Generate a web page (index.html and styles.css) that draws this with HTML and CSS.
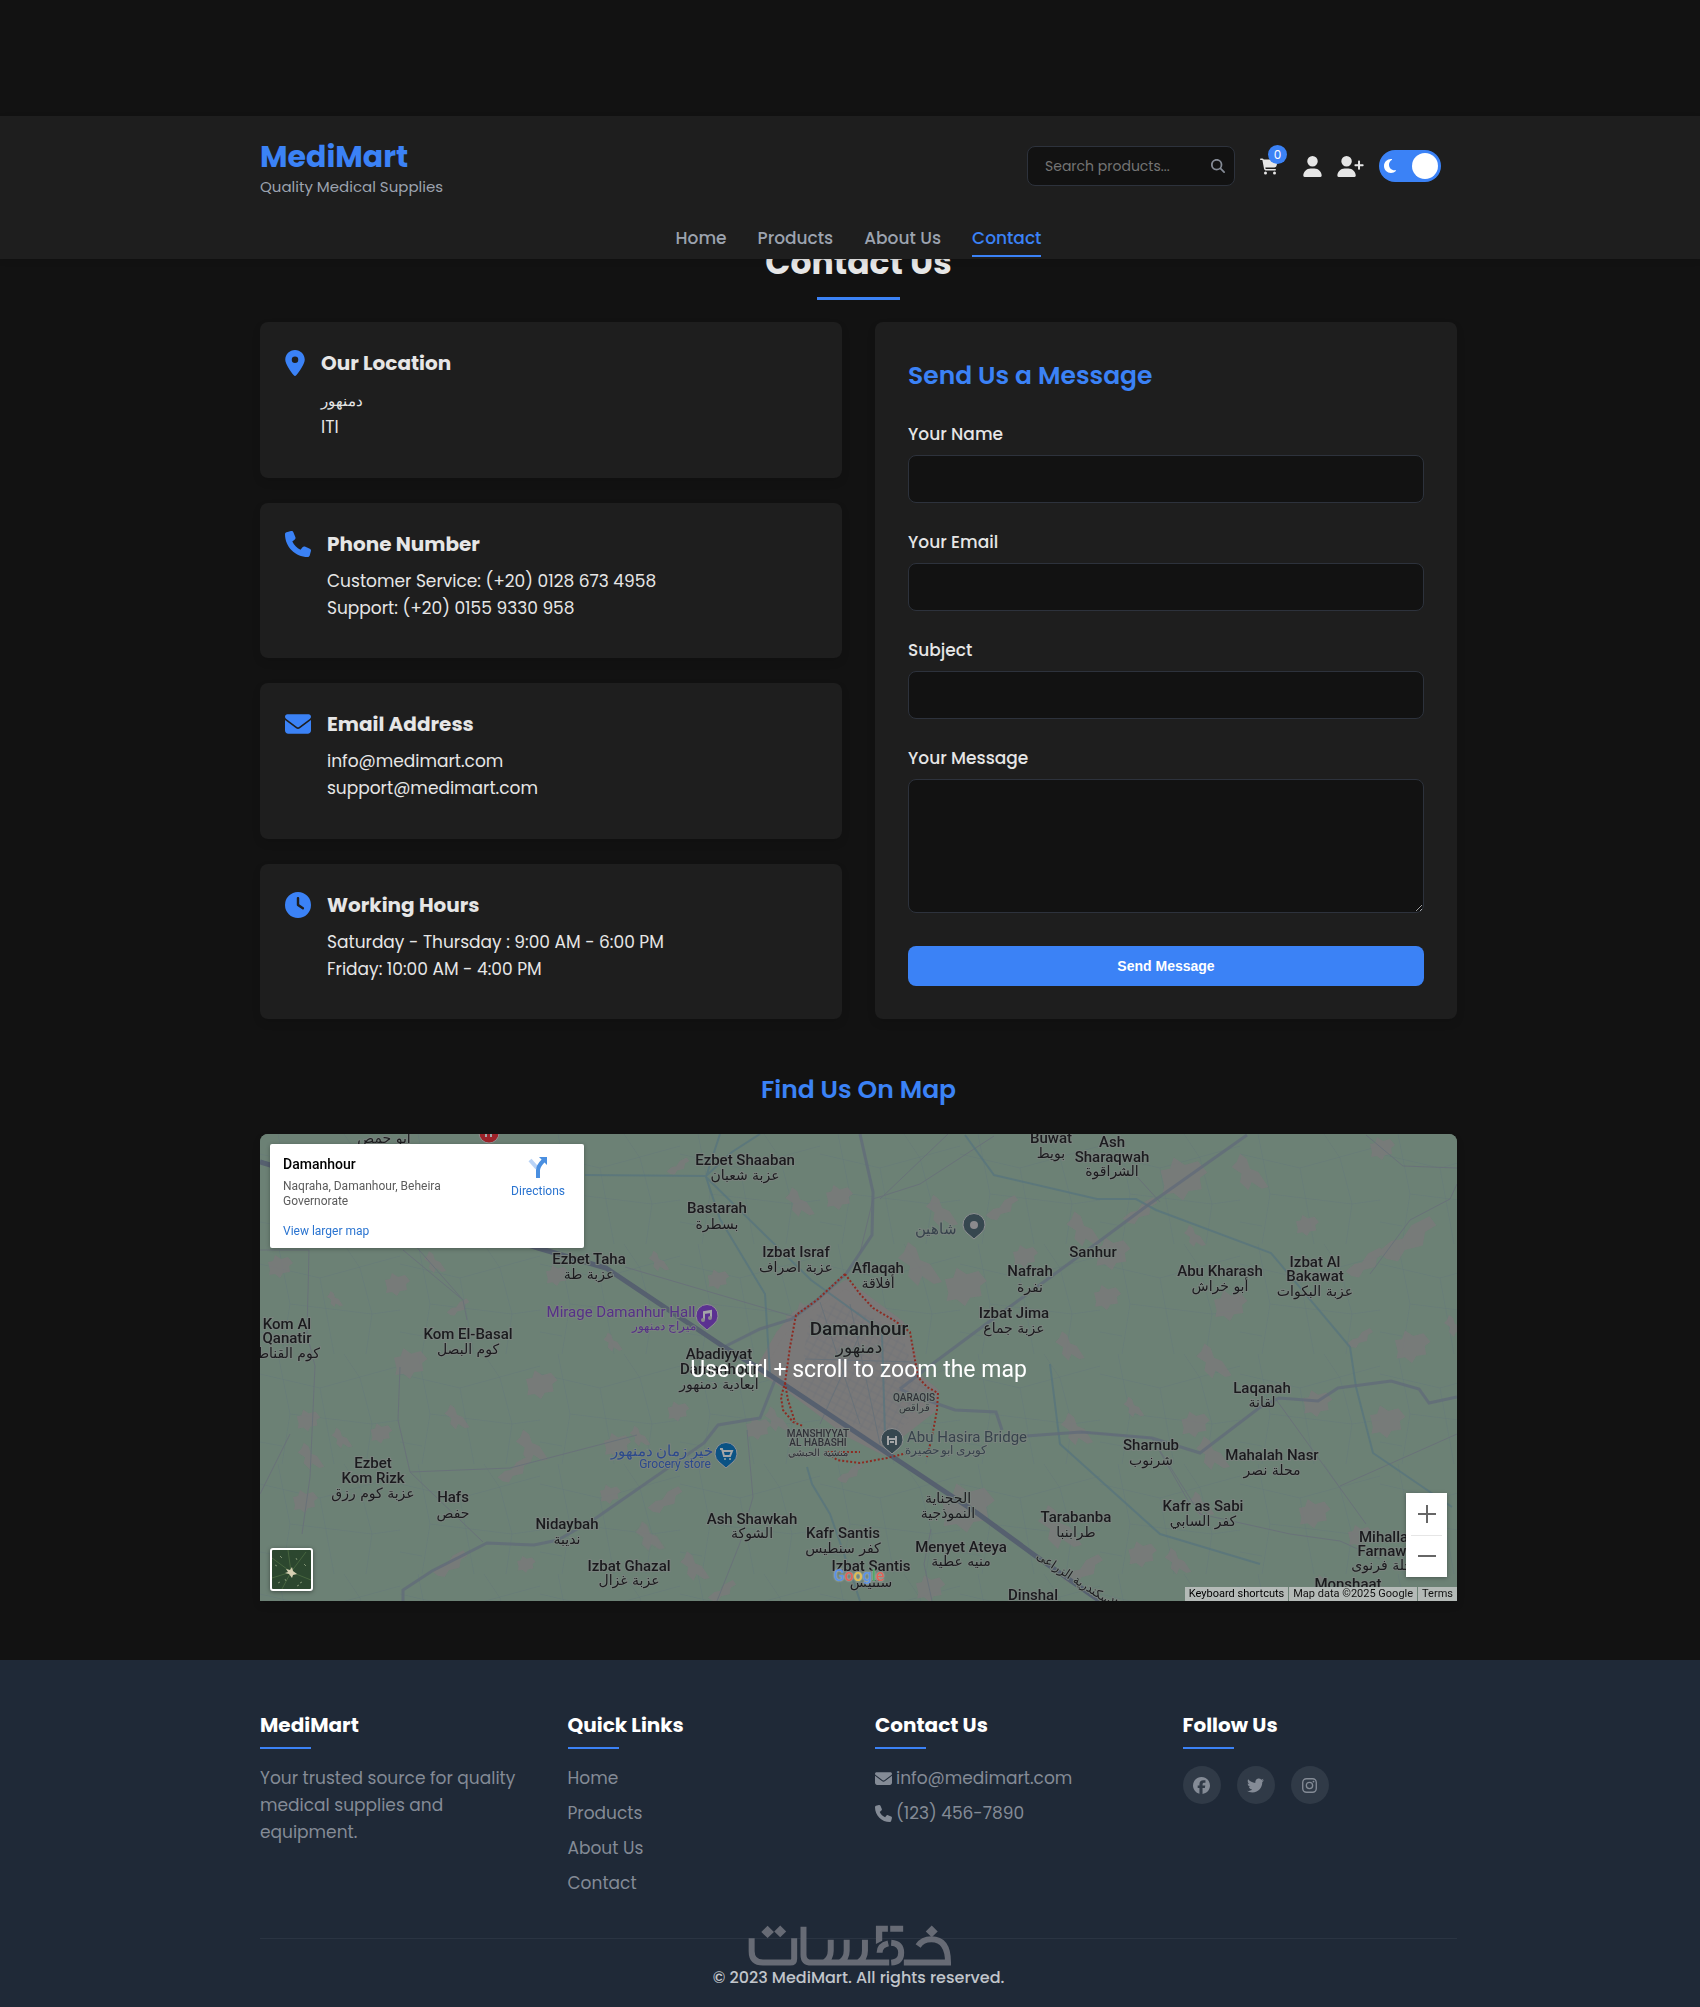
FILE: index.html
```html
<!DOCTYPE html>
<html lang="en">
<head>
<meta charset="utf-8">
<meta name="viewport" content="width=device-width, initial-scale=1">
<title>MediMart - Contact Us</title>
<link rel="stylesheet" href="styles.css">
</head>
<body>
<svg class="defs" aria-hidden="true">
  <symbol id="i-pin" viewBox="0 0 384 512"><path d="M215.7 499.2C267 435 384 279.4 384 192C384 86 298 0 192 0S0 86 0 192c0 87.400 117 243 168.300 307.200c12.300 15.300 35.100 15.300 47.400 0zM192 128a64 64 0 1 1 0 128 64 64 0 1 1 0-128z"/></symbol>
  <symbol id="i-phone" viewBox="0 0 512 512"><path d="M164.900 24.600c-7.700-18.600-28-28.500-47.400-23.200l-88 24C12.100 30.200 0 46 0 64C0 311.400 200.600 512 448 512c18 0 33.800-12.100 38.600-29.500l24-88c5.300-19.400-4.600-39.700-23.200-47.400l-96-40c-16.300-6.800-35.200-2.100-46.300 11.600L304.700 368C234.300 334.700 177.300 277.700 144 207.300L193.300 167c13.700-11.200 18.400-30 11.600-46.300l-40-96z"/></symbol>
  <symbol id="i-mail" viewBox="0 0 512 512"><path d="M48 64C21.500 64 0 85.500 0 112c0 15.100 7.100 29.300 19.200 38.400L236.800 313.600c11.400 8.500 27 8.500 38.400 0L492.800 150.400c12.100-9.100 19.200-23.300 19.200-38.400c0-26.500-21.500-48-48-48L48 64zM0 176L0 384c0 35.300 28.700 64 64 64l384 0c35.300 0 64-28.700 64-64l0-208L294.400 339.200c-22.800 17.100-54 17.100-76.800 0L0 176z"/></symbol>
  <symbol id="i-clock" viewBox="0 0 512 512"><path fill-rule="evenodd" d="M256 0a256 256 0 1 1 0 512A256 256 0 1 1 256 0zM232 120l0 136c0 8 4 15.500 10.700 20l96 64c11 7.400 25.900 4.400 33.300-6.700s4.400-25.900-6.700-33.300L280 243.200 280 120c0-13.300-10.700-24-24-24s-24 10.700-24 24z"/></symbol>
  <symbol id="i-user" viewBox="0 0 448 512"><path d="M224 256A128 128 0 1 0 224 0a128 128 0 1 0 0 256zm-45.700 48C79.800 304 0 383.800 0 482.300C0 498.700 13.300 512 29.700 512l388.600 0c16.400 0 29.700-13.300 29.700-29.700C448 383.800 368.200 304 269.700 304l-91.400 0z"/></symbol>
  <symbol id="i-user-plus" viewBox="0 0 640 512"><path d="M96 128a128 128 0 1 1 256 0A128 128 0 1 1 96 128zM0 482.300C0 383.800 79.800 304 178.300 304l91.400 0C368.200 304 448 383.800 448 482.300c0 16.400-13.300 29.700-29.700 29.700L29.700 512C13.300 512 0 498.700 0 482.300zM504 312l0-64-64 0c-13.300 0-24-10.700-24-24s10.700-24 24-24l64 0 0-64c0-13.300 10.700-24 24-24s24 10.700 24 24l0 64 64 0c13.300 0 24 10.700 24 24s-10.700 24-24 24l-64 0 0 64c0 13.300-10.700 24-24 24s-24-10.700-24-24z"/></symbol>
  <symbol id="i-cart" viewBox="0 0 576 512"><path d="M0 24C0 10.700 10.700 0 24 0L69.500 0c22 0 41.500 12.800 50.600 32l411 0c26.300 0 45.500 25 38.600 50.400l-41 152.300c-8.500 31.400-37 53.300-69.500 53.300l-288.500 0 5.400 28.500c2.200 11.300 12.100 19.500 23.600 19.500L488 336c13.300 0 24 10.700 24 24s-10.700 24-24 24l-288.300 0c-34.600 0-64.300-24.600-70.700-58.500L77.400 54.500c-.7-3.800-4-6.500-7.900-6.500L24 48C10.700 48 0 37.300 0 24zM128 464a48 48 0 1 1 96 0 48 48 0 1 1-96 0zm336-48a48 48 0 1 1 0 96 48 48 0 1 1 0-96z"/></symbol>
  <symbol id="i-search" viewBox="0 0 512 512"><path d="M416 208c0 45.900-14.900 88.300-40 122.700L502.600 457.400c12.500 12.500 12.500 32.800 0 45.300s-32.800 12.500-45.300 0L330.700 376c-34.400 25.200-76.800 40-122.700 40C93.100 416 0 322.900 0 208S93.100 0 208 0S416 93.100 416 208zM208 352a144 144 0 1 0 0-288 144 144 0 1 0 0 288z"/></symbol>
  <symbol id="i-moon" viewBox="0 0 384 512"><path d="M223.500 32C100 32 0 132.300 0 256S100 480 223.500 480c60.600 0 115.500-24.200 155.800-63.400c5-4.900 6.300-12.500 3.100-18.700s-10.100-9.700-17-8.500c-9.800 1.700-19.800 2.600-30.100 2.600c-96.900 0-175.500-78.800-175.500-176c0-65.800 36-123.100 89.300-153.300c6.100-3.500 9.200-10.500 7.700-17.300s-7.300-11.900-14.300-12.500c-6.300-.5-12.600-.8-19-.8z"/></symbol>
  <symbol id="i-facebook" viewBox="0 0 512 512"><path d="M512 256C512 114.600 397.400 0 256 0S0 114.600 0 256C0 376 82.700 476.800 194.200 504.500V334.200H141.400V256h52.800V222.300c0-87.100 39.400-127.500 125-127.500c16.200 0 44.200 3.200 55.700 6.400V172c-6-.6-16.500-1-29.600-1c-42 0-58.200 15.900-58.200 57.200V256h83.600l-14.400 78.200H287V510.100C413.800 494.800 512 386.900 512 256z"/></symbol>
  <symbol id="i-twitter" viewBox="0 0 512 512"><path d="M459.370 151.716c.325 4.548.325 9.097.325 13.645 0 138.720-105.583 298.558-298.558 298.558-59.452 0-114.680-17.219-161.137-47.106 8.447.974 16.568 1.299 25.340 1.299 49.055 0 94.213-16.568 130.274-44.832-46.132-.975-84.792-31.188-98.112-72.772 6.498.974 12.995 1.624 19.818 1.624 9.421 0 18.843-1.300 27.614-3.573-48.081-9.747-84.143-51.980-84.143-102.985v-1.299c13.969 7.797 30.214 12.670 47.431 13.319-28.264-18.843-46.781-51.005-46.781-87.391 0-19.492 5.197-37.360 14.294-52.954 51.655 63.675 129.300 105.258 216.365 109.807-1.624-7.797-2.599-15.918-2.599-24.040 0-57.828 46.782-104.934 104.934-104.934 30.213 0 57.502 12.670 76.670 33.137 23.715-4.548 46.456-13.320 66.599-25.340-7.798 24.366-24.366 44.833-46.132 57.827 21.117-2.273 41.584-8.122 60.426-16.243-14.292 20.791-32.161 39.308-52.628 54.253z"/></symbol>
  <symbol id="i-instagram" viewBox="0 0 448 512"><rect x="20" y="52" width="408" height="408" rx="112" fill="none" stroke="currentColor" stroke-width="40"/><circle cx="224" cy="256" r="95" fill="none" stroke="currentColor" stroke-width="40"/><circle cx="344" cy="137" r="27"/></symbol>
  <symbol id="blob-a" viewBox="-15 -12 30 24"><path d="M-12-4l5-1 2-6 6 4 7-2 5 6-4 3 1 6-7 1-3 5-5-4-6 1 1-5z"/></symbol>
  <symbol id="blob-b" viewBox="-15 -12 30 24"><path d="M-6-11l4 3 2 6 5 2 6 9-4 1-6-4-2 5-5-5 1-5-6-4 3-3z"/></symbol>
  <symbol id="blob-c" viewBox="-15 -12 30 24"><path d="M-13 5l6-5 5-1 4-6 8-4 3 4-5 3-1 6-8 2-3 5-5-1z"/></symbol>
</svg>

<header class="site-header">
  <div class="container">
    <div class="header-row">
      <div class="brand">
        <a class="brand-name" href="#">MediMart</a>
        <p class="brand-tag">Quality Medical Supplies</p>
      </div>
      <div class="header-tools">
        <form class="search">
          <input class="search-input" type="search" placeholder="Search products..." aria-label="Search products">
          <button class="search-button" type="button" aria-label="Search"><svg class="ico-search"><use href="#i-search"/></svg></button>
        </form>
        <div class="user-tools">
          <a class="cart" href="#" aria-label="Cart"><svg class="ico-cart"><use href="#i-cart"/></svg><span class="cart-count">0</span></a>
          <a class="tool" href="#" aria-label="Log in"><svg class="ico-user"><use href="#i-user"/></svg></a>
          <a class="tool" href="#" aria-label="Register"><svg class="ico-plus"><use href="#i-user-plus"/></svg></a>
          <label class="theme">
            <input class="theme-input" type="checkbox" checked aria-label="Dark mode">
            <svg class="ico-moon"><use href="#i-moon"/></svg>
          </label>
        </div>
      </div>
    </div>
    <nav class="nav">
      <a class="nav-link" href="#">Home</a>
      <a class="nav-link" href="#">Products</a>
      <a class="nav-link" href="#">About Us</a>
      <a class="nav-link nav-link-active" href="#">Contact</a>
    </nav>
  </div>
</header>

<main class="main">
  <div class="container">
    <h1 class="page-title">Contact Us</h1>
    <div class="contact">
      <div class="info">
        <section class="card">
          <svg class="card-icon card-icon-narrow"><use href="#i-pin"/></svg>
          <div><h2 class="card-title">Our Location</h2><p class="card-text"><span class="card-arabic" lang="ar">دمنهور</span></p><p class="card-text">ITI</p></div>
        </section>
        <section class="card">
          <svg class="card-icon"><use href="#i-phone"/></svg>
          <div><h2 class="card-title">Phone Number</h2><p class="card-text">Customer Service: (+20) 0128 673 4958</p><p class="card-text">Support: (+20) 0155 9330 958</p></div>
        </section>
        <section class="card">
          <svg class="card-icon"><use href="#i-mail"/></svg>
          <div><h2 class="card-title">Email Address</h2><p class="card-text">info@medimart.com</p><p class="card-text">support@medimart.com</p></div>
        </section>
        <section class="card">
          <svg class="card-icon"><use href="#i-clock"/></svg>
          <div><h2 class="card-title">Working Hours</h2><p class="card-text">Saturday - Thursday : 9:00 AM - 6:00 PM</p><p class="card-text">Friday: 10:00 AM - 4:00 PM</p></div>
        </section>
      </div>
      <form class="form">
        <h2 class="form-title">Send Us a Message</h2>
        <div class="field"><label class="label" for="name">Your Name</label><input class="input" id="name" type="text"></div>
        <div class="field"><label class="label" for="email">Your Email</label><input class="input" id="email" type="email"></div>
        <div class="field"><label class="label" for="subject">Subject</label><input class="input" id="subject" type="text"></div>
        <div class="field"><label class="label" for="message">Your Message</label><textarea class="input textarea" id="message"></textarea></div>
        <button class="submit" type="button">Send Message</button>
      </form>
    </div>

    <section class="find">
      <h2 class="find-title">Find Us On Map</h2>
      <div class="map">
        <svg class="map-canvas" viewBox="0 0 1197 467" preserveAspectRatio="xMidYMid slice" role="img" aria-label="Map of Damanhour">
          <defs>
            <pattern id="fields" width="140" height="110" patternUnits="userSpaceOnUse">
              <path class="field-line" d="M0 20L60 34 140 12M18 0L30 60 22 110M60 34L74 110M100 24L112 70 106 110M30 60L112 70 140 66M0 88L22 92M84 0L100 24"/>
            </pattern>
            <pattern id="streets" width="16" height="14" patternUnits="userSpaceOnUse" patternTransform="rotate(28)">
              <path class="street-line" d="M0 3H16M0 10H16M4 0V14M12 0V14"/>
            </pattern>
          </defs>
          <rect class="land" width="1197" height="467"/>
          <rect width="1197" height="467" fill="url(#fields)"/>
          <g class="blobs">
            <use href="#blob-a" x="5" y="120" width="30" height="24"/><use href="#blob-b" x="160" y="115" width="30" height="26"/><use href="#blob-a" x="120" y="138" width="34" height="24"/>
            <use href="#blob-c" x="185" y="163" width="26" height="22"/><use href="#blob-b" x="64" y="155" width="22" height="20"/><use href="#blob-a" x="280" y="130" width="34" height="22"/>
            <use href="#blob-b" x="385" y="110" width="28" height="34"/><use href="#blob-a" x="560" y="50" width="38" height="26"/><use href="#blob-c" x="405" y="22" width="26" height="22"/>
            <use href="#blob-b" x="520" y="38" width="40" height="60"/><use href="#blob-a" x="445" y="130" width="26" height="30"/><use href="#blob-b" x="340" y="190" width="26" height="36"/>
            <use href="#blob-a" x="130" y="212" width="40" height="34"/><use href="#blob-a" x="262" y="235" width="38" height="30"/><use href="#blob-b" x="180" y="265" width="34" height="36"/>
            <use href="#blob-a" x="34" y="270" width="28" height="32"/><use href="#blob-b" x="68" y="290" width="28" height="28"/><use href="#blob-a" x="108" y="286" width="26" height="26"/>
            <use href="#blob-b" x="250" y="290" width="44" height="44"/><use href="#blob-a" x="332" y="298" width="50" height="26"/><use href="#blob-c" x="235" y="320" width="38" height="34"/>
            <use href="#blob-b" x="366" y="290" width="28" height="24"/><use href="#blob-b" x="33" y="305" width="36" height="34"/><use href="#blob-a" x="405" y="262" width="26" height="30"/>
            <use href="#blob-a" x="30" y="350" width="30" height="34"/><use href="#blob-a" x="336" y="350" width="28" height="20"/><use href="#blob-c" x="385" y="350" width="40" height="34"/>
            <use href="#blob-b" x="370" y="382" width="40" height="40"/><use href="#blob-c" x="165" y="415" width="50" height="32"/><use href="#blob-b" x="415" y="410" width="40" height="44"/>
            <use href="#blob-c" x="445" y="445" width="34" height="26"/><use href="#blob-a" x="255" y="420" width="22" height="20"/><use href="#blob-b" x="500" y="265" width="34" height="40"/>
            <use href="#blob-a" x="480" y="282" width="36" height="24"/><use href="#blob-c" x="570" y="328" width="40" height="24"/><use href="#blob-a" x="520" y="160" width="60" height="60"/>
            <use href="#blob-b" x="630" y="95" width="60" height="70"/><use href="#blob-a" x="680" y="130" width="50" height="44"/><use href="#blob-c" x="720" y="60" width="44" height="30"/>
            <use href="#blob-b" x="660" y="55" width="44" height="44"/><use href="#blob-a" x="750" y="110" width="30" height="24"/><use href="#blob-b" x="800" y="65" width="48" height="60"/>
            <use href="#blob-a" x="820" y="102" width="64" height="34"/><use href="#blob-c" x="860" y="60" width="40" height="36"/><use href="#blob-a" x="895" y="20" width="56" height="48"/>
            <use href="#blob-b" x="965" y="10" width="50" height="56"/><use href="#blob-a" x="1030" y="80" width="34" height="22"/><use href="#blob-c" x="1110" y="80" width="74" height="54"/>
            <use href="#blob-c" x="1075" y="112" width="60" height="36"/><use href="#blob-b" x="920" y="85" width="30" height="34"/><use href="#blob-a" x="825" y="150" width="44" height="26"/>
            <use href="#blob-a" x="945" y="155" width="50" height="32"/><use href="#blob-b" x="790" y="190" width="40" height="44"/><use href="#blob-b" x="930" y="205" width="48" height="44"/>
            <use href="#blob-a" x="1130" y="195" width="44" height="34"/><use href="#blob-c" x="1085" y="190" width="30" height="30"/><use href="#blob-b" x="1180" y="170" width="30" height="44"/>
            <use href="#blob-b" x="795" y="275" width="44" height="40"/><use href="#blob-a" x="918" y="275" width="34" height="30"/><use href="#blob-b" x="860" y="260" width="28" height="26"/>
            <use href="#blob-a" x="1105" y="270" width="44" height="34"/><use href="#blob-b" x="930" y="300" width="46" height="38"/><use href="#blob-a" x="1035" y="255" width="44" height="28"/>
            <use href="#blob-a" x="1035" y="360" width="38" height="38"/><use href="#blob-b" x="925" y="345" width="34" height="50"/><use href="#blob-b" x="770" y="360" width="60" height="66"/>
            <use href="#blob-a" x="865" y="405" width="34" height="30"/><use href="#blob-b" x="900" y="410" width="36" height="34"/><use href="#blob-a" x="675" y="340" width="64" height="66"/>
            <use href="#blob-a" x="1080" y="390" width="40" height="24"/><use href="#blob-c" x="800" y="415" width="46" height="44"/><use href="#blob-b" x="1050" y="436" width="30" height="32"/>
            <use href="#blob-a" x="650" y="440" width="40" height="28"/><use href="#blob-a" x="1100" y="2" width="44" height="24"/><use href="#blob-a" x="15" y="16" width="50" height="20"/>
          </g>
          <path class="town" d="M536 181L560 168 586 150 640 190 650 215 657 243 675 258 672 275 640 300 626 318 590 300 540 262 524 250 500 235 520 200z"/>
          <path fill="url(#streets)" d="M550 185L575 168 640 195 655 240 670 258 636 300 600 295 540 255 545 210z"/>
          <path class="road-thin" d="M0 116L49 116 47 200 55 232 50 343 42 400M143 116L203 166 207 186M140 233L138 286 150 338 223 408M365 133L535 183M150 338L250 334 377 301M145 100L203 166M0 360L30 300M487 296L493 363 480 409 457 467M671 395L664 430 672 467M613 65L660 50 734 2M600 119L613 65M821 298L892 304 930 370M892 304L940 380 1030 400 1080 407 1120 425M1080 352L1197 300M688 0L620 65M900 68L870 35M1106 1L1143 32 1197 34M1015 264L1106 390M1110 140L1150 86 1190 65 1197 50M560 168L600 290M600 200L560 290M545 225L655 228M590 170L620 310"/>
          <path class="water" d="M0 27L12 30M325 41L446 42 472 18 500 0M460 0L446 43 460 85 505 160 510 240M446 43L551 146 612 190M622 200L625 300M705 1L734 41 837 65 876 65 896 76 1011 119 1090 213 1096 253 1113 319 1192 373M547 333L552 350 570 380 590 437 600 467M790 230L800 310 900 400 1000 430"/>
          <path class="road" d="M464 213L500 195 532 185 557 166 586 140 612 101 613 58 600 0M640 255L671 231 722 193 837 109 888 71 987 1M640 255L655 262 695 276 736 278 742 296M766 302L821 298 892 304 940 319 999 274 1019 264 1058 267 1078 254 1131 247 1159 255 1169 269 1197 263M515 246L500 284 458 291 444 309 336 384 298 406 274 411 227 409 172 437 143 456V467"/>
          <path class="highway" d="M0 28L278 114 346 134 464 213 510 241 627 319 717 379 777 423 840 467"/>
          <path class="boundary" d="M585 140L557 166 536 181 530 213 525 249 521 263 523 276 533 288 543 292M525 249L528 266 535 288M585 140L600 160 613 174 635 187 650 198 655 226 658 243 667 253 678 259 677 276 672 303 667 323M647 319L627 324 600 329 577 326 567 318H600"/>

          <g class="places">
            <text x="124" y="9" class="ar">أبو حمص</text>
            <text x="485" y="31">Ezbet Shaaban</text><text x="485" y="46" class="ar">عزبة شعبان</text>
            <text x="457" y="79">Bastarah</text><text x="457" y="95" class="ar">بسطرة</text>
            <text x="536" y="123">Izbat Israf</text><text x="536" y="138" class="ar">عزبة اصراف</text>
            <text x="618" y="139">Aflaqah</text><text x="618" y="154" class="ar">أفلاقة</text>
            <text x="833" y="123">Sanhur</text>
            <text x="770" y="142">Nafrah</text><text x="770" y="158" class="ar">نفرة</text>
            <text x="754" y="184">Izbat Jima</text><text x="754" y="199" class="ar">عزبة جماع</text>
            <text x="960" y="142">Abu Kharash</text><text x="960" y="157" class="ar">أبو خراش</text>
            <text x="1055" y="133">Izbat Al</text><text x="1055" y="147">Bakawat</text><text x="1055" y="162" class="ar">عزبة البكوات</text>
            <text x="791" y="9">Buwat</text><text x="791" y="24" class="ar">بويط</text>
            <text x="852" y="13">Ash</text><text x="852" y="28">Sharaqwah</text><text x="852" y="42" class="ar">الشراقوة</text>
            <text x="329" y="130">Ezbet Taha</text><text x="329" y="145" class="ar">عزبة طة</text>
            <text x="208" y="205">Kom El-Basal</text><text x="208" y="220" class="ar">كوم البصل</text>
            <text x="27" y="195">Kom Al</text><text x="27" y="209">Qanatir</text><text x="25" y="224" class="ar">كوم القناطر</text>
            <text x="459" y="225">Abadiyyat</text><text x="459" y="240">Damanhour</text><text x="459" y="255" class="ar">ابعادية دمنهور</text>
            <text x="1002" y="259">Laqanah</text><text x="1002" y="273" class="ar">لقانة</text>
            <text x="891" y="316">Sharnub</text><text x="891" y="331" class="ar">شرنوب</text>
            <text x="1012" y="326">Mahalah Nasr</text><text x="1012" y="341" class="ar">محلة نصر</text>
            <text x="113" y="334">Ezbet</text><text x="113" y="349">Kom Rizk</text><text x="113" y="364" class="ar">عزبة كوم رزق</text>
            <text x="193" y="368">Hafs</text><text x="193" y="384" class="ar">حفص</text>
            <text x="307" y="395">Nidaybah</text><text x="307" y="410" class="ar">نديبة</text>
            <text x="492" y="390">Ash Shawkah</text><text x="492" y="404" class="ar">الشوكة</text>
            <text x="583" y="404">Kafr Santis</text><text x="583" y="419" class="ar">كفر سنطيس</text>
            <text x="688" y="369" class="ar">الحجناية</text><text x="688" y="384" class="ar">النموذجية</text>
            <text x="701" y="418">Menyet Ateya</text><text x="701" y="432" class="ar">منيه عطية</text>
            <text x="816" y="388">Tarabanba</text><text x="816" y="403" class="ar">طرابنبا</text>
            <text x="943" y="377">Kafr as Sabi</text><text x="943" y="392" class="ar">كفر السابي</text>
            <text x="369" y="437">Izbat Ghazal</text><text x="369" y="451" class="ar">عزبة غزال</text>
            <text x="611" y="437">Izbat Santis</text><text x="611" y="453" class="ar">سنتيس</text>
            <text x="773" y="466">Dinshal</text>
            <text x="1126" y="408">Mihallat</text><text x="1126" y="422">Farnawa</text><text x="1126" y="436" class="ar">محلة فرنوى</text>
            <text x="1088" y="455">Monshaat</text>
            <text x="816" y="450" class="ar road-name" transform="rotate(33 816 450)">الإسكندرية الزراعى</text>
            <text x="599" y="201" class="city">Damanhour</text><text x="599" y="219" class="city-ar">دمنهور</text>
            <text x="654" y="267" class="district">QARAQIS</text><text x="654" y="277" class="district">قراقص</text>
            <text x="558" y="303" class="district">MANSHIYYAT</text><text x="558" y="312" class="district">AL HABASHI</text><text x="558" y="322" class="district">منشية الحبشي</text>
            <text x="361" y="183" class="poi purple">Mirage Damanhur Hall</text><text x="404" y="196" class="poi-sub purple">ميراج دمنهور</text>
            <text x="676" y="100" class="poi slate">شاهين</text>
            <text x="707" y="308" class="poi slate">Abu Hasira Bridge</text><text x="686" y="320" class="poi-sub slate">كوبرى ابو حصيرة</text>
            <text x="402" y="322" class="poi blue">خير زمان دمنهور</text><text x="415" y="334" class="poi-sub blue">Grocery store</text>
          </g>
          <g class="pins">
            <path class="pin-edge" fill="#5b3191" d="M447 196l-7-6a11 11 0 1 1 14 0z"/><path class="glyph" d="M444 186V178l7-1v7M444 179l7-1"/><circle fill="#8b8a8d" cx="443" cy="186" r="2"/><circle fill="#8b8a8d" cx="450" cy="184" r="2"/>
            <path class="pin-edge" fill="#36474f" d="M714 105l-7-6a11 11 0 1 1 14 0z"/><circle fill="#8b8a8d" cx="714" cy="91" r="4"/>
            <path class="pin-edge" fill="#36474f" d="M632 320l-7-6a11 11 0 1 1 14 0z"/><path class="glyph" d="M628 311V302M636 311V302M628 305h8M630 308h4"/>
            <path class="pin-edge" fill="#0b5284" d="M466 334l-7-6a11 11 0 1 1 14 0z"/><path class="glyph" d="M460 315h2l2 7h6l2-5h-9"/><circle fill="#9aa" cx="465" cy="325" r="1"/><circle fill="#9aa" cx="470" cy="325" r="1"/>
            <circle class="pin-edge" fill="#9c2229" cx="229" cy="-1" r="10"/><path class="glyph" d="M226-3v6M231-3v6"/>
          </g>
        </svg>
        <p class="map-hint">Use ctrl + scroll to zoom the map</p>
        <div class="place-card">
          <div class="place-info">
            <h3 class="place-name">Damanhour</h3>
            <p class="place-address">Naqraha, Damanhour, Beheira Governorate</p>
            <a class="place-link" href="#">View larger map</a>
          </div>
          <a class="directions" href="#">
            <svg class="ico-directions" viewBox="0 0 20 22"><path d="M2 4l7 8" fill="none" stroke="#b9d3f6" stroke-width="4"/><path d="M10 22v-8q0-4 6-10" fill="none" stroke="#4a8fe0" stroke-width="4"/><path fill="#4a8fe0" d="M11 1h8v8z"/></svg>
            Directions
          </a>
        </div>
        <button class="satellite" type="button" aria-label="Show satellite imagery">
          <svg class="satellite-view" viewBox="0 0 39 39"><rect width="39" height="39" fill="#2c472f"/><path d="M0 8L19 22 39 30M19 22L10 39M19 22L34 2M19 22L0 28M19 22L16 0" stroke="#47653f" fill="none"/><path d="M3 15l2 1M8 6l2 2M28 33l2-1M32 14l2 2M6 33l2-1M24 8l1 2M25 36l2-1M13 29l1 2" stroke="#7d9070" stroke-width="1"/><path fill="#d6cfb2" d="M14 19l4 1 2-3 1 4 4 3-4 1-1 3-3-4-4-1 3-1z"/></svg>
        </button>
        <div class="google" aria-label="Google"><span class="g-blue">G</span><span class="g-red">o</span><span class="g-yellow">o</span><span class="g-blue">g</span><span class="g-green">l</span><span class="g-red">e</span></div>
        <div class="zoom">
          <button class="zoom-button" type="button" aria-label="Zoom in"><svg class="ico-zoom" viewBox="0 0 18 18"><path d="M9 0V18M0 9H18"/></svg></button>
          <button class="zoom-button" type="button" aria-label="Zoom out"><svg class="ico-zoom" viewBox="0 0 18 18"><path d="M0 9H18"/></svg></button>
        </div>
        <div class="legal"><button class="legal-item" type="button">Keyboard shortcuts</button><span class="legal-item">Map data ©2025 Google</span><a class="legal-item" href="#">Terms</a></div>
      </div>
    </section>
  </div>
</main>

<footer class="footer">
  <div class="container">
    <div class="footer-grid">
      <section><h3 class="footer-title">MediMart</h3><p class="footer-text">Your trusted source for quality medical supplies and equipment.</p></section>
      <section><h3 class="footer-title">Quick Links</h3>
        <ul class="footer-list"><li><a class="footer-link" href="#">Home</a></li><li><a class="footer-link" href="#">Products</a></li><li><a class="footer-link" href="#">About Us</a></li><li><a class="footer-link" href="#">Contact</a></li></ul></section>
      <section><h3 class="footer-title">Contact Us</h3>
        <ul class="footer-list"><li class="footer-contact"><svg class="ico-footer"><use href="#i-mail"/></svg>info@medimart.com</li><li class="footer-contact"><svg class="ico-footer"><use href="#i-phone"/></svg>(123) 456-7890</li></ul></section>
      <section><h3 class="footer-title">Follow Us</h3>
        <div class="social"><a class="social-link" href="#" aria-label="Facebook"><svg class="ico-social"><use href="#i-facebook"/></svg></a><a class="social-link" href="#" aria-label="Twitter"><svg class="ico-social"><use href="#i-twitter"/></svg></a><a class="social-link" href="#" aria-label="Instagram"><svg class="ico-social"><use href="#i-instagram"/></svg></a></div></section>
    </div>
    <p class="copyright">© 2023 MediMart. All rights reserved.</p>
  </div>
  <svg class="watermark" viewBox="140 72 620 132" role="img" aria-label="خمسات">
    <g fill="none" stroke="#676b75" stroke-width="18"><path d="M154 115V154Q154 188 188 188H270Q282 188 282 176V115M310 80V164Q310 188 334 188H568M392 119V152Q392 176 372 188M440 119V152Q440 176 420 188M495 119V152Q495 176 475 188M539 158Q539 136 565 130M574 128Q604 130 604 158Q604 186 574 188M612 188H745Q745 118 695 118Q668 118 655 138"/></g>
    <g fill="#676b75"><path d="M202 77l19 19-19 18-19-18zM240 76l18 18-18 18-18-18zM696 76l18 18-18 18-18-18zM528 77H564V95H547V122L528 132zM571 77H610V95H571z"/></g>
  </svg>
</footer>
</body>
</html>
```
FILE: styles.css
```css
* { box-sizing: border-box; }

body {
  margin: 0;
  padding-top: 116px;
  background: #121212;
  color: #e6e6e6;
  font-family: Poppins, Inter, "Noto Sans", sans-serif;
  font-size: 17px;
  line-height: 27px;
}

h1, h2, h3, p, ul { margin: 0; padding: 0; }
ul { list-style: none; }
a { color: inherit; text-decoration: none; }
button, input, textarea { font: inherit; }
svg { display: block; fill: currentColor; }
.defs { position: absolute; width: 0; height: 0; }

.container { max-width: 1197px; margin: 0 auto; }

/* Header */
.site-header {
  position: relative;
  z-index: 2;
  padding: 20px 0 2px 17px;
  background: #1e1e1e;
  box-shadow: 0 2px 6px rgba(0, 0, 0, .1);
}
.header-row { display: flex; justify-content: space-between; align-items: center; }
.brand-name { display: block; color: #3b82f6; font-size: 30px; font-weight: 700; line-height: 42px; }
.brand-tag { color: #9ca3af; font-size: 15px; line-height: 18px; }
.header-tools { display: flex; align-items: center; gap: 25px; padding-right: 16px; }
.search {
  display: flex;
  align-items: center;
  width: 208px;
  height: 40px;
  padding: 0 9px 0 17px;
  border: 1px solid #2d323c;
  border-radius: 8px;
  background: #121212;
}
.search-input { flex: 1; min-width: 0; padding: 0; border: 0; outline: 0; background: none; color: #e6e6e6; font-size: 14px; line-height: 20px; }
.search-input::placeholder { color: #757575; opacity: 1; }
.search-button { padding: 0; border: 0; background: none; color: #858b96; }
.ico-search { width: 14px; height: 14px; }
.user-tools { display: flex; align-items: center; gap: 15px; }
.cart { position: relative; margin-right: 10px; }
.ico-cart { width: 18px; height: 17px; }
.cart-count {
  position: absolute;
  top: -13px;
  left: 8px;
  width: 19px;
  height: 19px;
  border-radius: 50%;
  background: #3b82f6;
  color: #fff;
  font-size: 12px;
  line-height: 19px;
  text-align: center;
}
.ico-user { width: 19px; height: 21px; }
.ico-plus { width: 27px; height: 21px; }
.theme { display: grid; align-items: center; cursor: pointer; }
.theme-input {
  grid-area: 1 / 1;
  appearance: none;
  display: flex;
  align-items: center;
  justify-content: flex-end;
  width: 62px;
  height: 32px;
  margin: 0;
  padding: 3px;
  border-radius: 16px;
  background: #3b82f6;
}
.theme-input::before { content: ""; width: 26px; height: 26px; border-radius: 50%; background: #fff; }
.ico-moon { grid-area: 1 / 1; width: 12px; height: 16px; margin-left: 5px; color: #fff; }
.nav { display: flex; justify-content: center; gap: 31px; margin-top: 27px; }
.nav-link { padding-bottom: 2px; border-bottom: 2px solid transparent; color: #9ca3af; font-weight: 500; line-height: 30px; }
.nav-link-active { border-color: #3b82f6; color: #3b82f6; }

/* Contact */
.main { padding: 0 0 59px 17px; }
.page-title { margin: -23px 0 22px; font-size: 33px; font-weight: 700; line-height: 54px; text-align: center; }
.page-title::after { content: ""; display: block; width: 83px; height: 3px; margin: 7px auto 0; background: #3b82f6; }
.contact { display: grid; grid-template-columns: 1fr 1fr; gap: 33px; }
.info { display: flex; flex-direction: column; gap: 25px; }
.card, .form { border-radius: 8px; background: #1e1e1e; box-shadow: 0 4px 8px rgba(0, 0, 0, .1); }
.card { display: flex; flex: 1; gap: 16px; padding: 25px 25px 34px; }
.card-icon { width: 26px; height: 26px; margin-top: 3px; color: #3b82f6; }
.card-icon-narrow { width: 20px; }
.card-title { margin-bottom: 8px; font-size: 20px; font-weight: 700; line-height: 32px; }
.card-arabic { font-size: 15px; }
.form { padding: 33px; }
.form-title { margin-bottom: 24px; color: #3b82f6; font-size: 25px; font-weight: 600; line-height: 42px; }
.field { display: flex; flex-direction: column; gap: 8px; margin-bottom: 26px; }
.label { font-weight: 500; line-height: 26px; }
.input { width: 100%; height: 48px; padding: 12px; border: 1px solid #2d323c; border-radius: 8px; background: #121212; color: #e6e6e6; }
.textarea { height: 134px; margin-bottom: 7px; resize: vertical; }
.submit {
  width: 100%;
  height: 40px;
  border: 0;
  border-radius: 8px;
  background: #3b82f6;
  color: #fff;
  font-family: "Liberation Sans", Arial, sans-serif;
  font-size: 14px;
  font-weight: 700;
}

/* Map */
.find { margin-top: 51px; }
.find-title { margin-bottom: 24px; color: #3b82f6; font-size: 25px; font-weight: 600; line-height: 40px; text-align: center; }
.map {
  position: relative;
  height: 467px;
  overflow: hidden;
  border-radius: 8px 8px 0 0;
  background: #6c8175;
  box-shadow: 0 4px 8px rgba(0, 0, 0, .1);
  font-family: Roboto, "Noto Sans", sans-serif;
}
.map-canvas { width: 100%; height: 100%; }
.land { fill: #6c8175; }
.field-line { fill: none; stroke: #657a78; stroke-width: 1; opacity: .6; }
.street-line { fill: none; stroke: #6d7078; stroke-width: 1; opacity: .6; }
.blobs { color: #7b7a7b; opacity: .8; }
.town { fill: #7a7979; stroke: #7a7979; stroke-width: 8; stroke-linejoin: round; }
.road-thin, .water, .road, .highway, .boundary, .glyph { fill: none; }
.road-thin { stroke: #697279; stroke-width: 1; }
.water { stroke: #55747d; stroke-width: 2; opacity: .7; }
.road { stroke: #626c79; stroke-width: 3; opacity: .8; }
.highway { stroke: #56606f; stroke-width: 5; }
.boundary { stroke: #8d2b22; stroke-width: 2; stroke-dasharray: 2 2; }
.places { fill: #1b1b1e; stroke: #78827d; stroke-width: 2; paint-order: stroke; font-size: 15px; font-weight: 500; text-anchor: middle; }
.ar { font-family: "DejaVu Sans", sans-serif; font-size: 14px; font-weight: 400; }
.road-name { font-size: 12px; }
.city { font-size: 19px; font-weight: 500; }
.city-ar { font-family: "DejaVu Sans", sans-serif; font-size: 17px; font-weight: 400; }
.district { fill: #303238; font-size: 10px; font-weight: 500; }
.poi { font-size: 15px; font-weight: 400; }
.poi-sub { font-size: 12px; font-weight: 400; }
.purple { fill: #553187; }
.slate { fill: #37434c; }
.blue { fill: #2c4a8c; }
.pin-edge { stroke: #8f9092; stroke-width: 1; }
.glyph { stroke: #a3a5a7; stroke-width: 2; }
.map-hint {
  position: absolute;
  inset: 0;
  display: flex;
  align-items: center;
  justify-content: center;
  padding-top: 4px;
  color: #fff;
  font-size: 23px;
}
.place-card {
  position: absolute;
  top: 10px;
  left: 10px;
  display: flex;
  justify-content: space-between;
  width: 314px;
  height: 104px;
  padding: 12px 19px 8px 13px;
  border-radius: 2px;
  background: #fff;
  box-shadow: 0 1px 4px rgba(0, 0, 0, .3);
  font-size: 12px;
  line-height: 15px;
}
.place-info { display: flex; flex-direction: column; width: 180px; }
.place-name { margin-bottom: 7px; color: #000; font-size: 14px; font-weight: 500; line-height: 16px; }
.place-address { color: #5b5b5b; }
.place-link { margin-top: 15px; }
.place-link, .directions { color: #2a74d0; }
.directions { display: flex; flex-direction: column; align-items: center; gap: 6px; }
.ico-directions { width: 20px; height: 22px; }
.satellite {
  position: absolute;
  bottom: 10px;
  left: 10px;
  width: 43px;
  height: 43px;
  padding: 0;
  border: 2px solid #fff;
  border-radius: 3px;
  overflow: hidden;
  box-shadow: 0 1px 4px rgba(0, 0, 0, .4);
}
.satellite-view { width: 39px; height: 39px; }
.google {
  position: absolute;
  bottom: 12px;
  left: 50%;
  margin-left: -25px;
  font-size: 16px;
  font-weight: 500;
  text-shadow: 0 0 2px rgba(255, 255, 255, .6);
}
.g-blue { color: #5b90e6; }
.g-red { color: #df6259; }
.g-yellow { color: #e3bd4f; }
.g-green { color: #4fa867; }
.zoom {
  position: absolute;
  right: 10px;
  bottom: 24px;
  display: flex;
  flex-direction: column;
  width: 41px;
  height: 84px;
  background: #fff;
  box-shadow: 0 1px 4px rgba(0, 0, 0, .3);
}
.zoom-button { display: grid; flex: 1; place-items: center; padding: 0; border: 0; background: none; }
.zoom-button + .zoom-button { margin: 0 5px; border-top: 1px solid #e6e6e6; }
.ico-zoom { width: 18px; height: 18px; fill: none; stroke: #666; stroke-width: 2; }
.legal { position: absolute; right: 0; bottom: 0; display: flex; gap: 1px; color: #111; font-size: 11px; line-height: 14px; }
.legal-item { padding: 0 4px; border: 0; background: #b4bab7; }

/* Footer */
.footer { position: relative; padding: 49px 0 15px 17px; background: #1f2937; color: #848b96; }
.footer-grid { display: grid; grid-template-columns: repeat(4, 1fr); gap: 33px; padding-bottom: 33px; }
.footer-title { margin-bottom: 16px; color: #fff; font-size: 20px; font-weight: 700; line-height: 32px; }
.footer-title::after { content: ""; display: block; width: 51px; height: 2px; margin-top: 6px; background: #3b82f6; }
.footer-list li { margin-bottom: 8px; }
.footer-contact { display: flex; align-items: center; gap: 4px; }
.ico-footer { width: 17px; height: 17px; }
.social { display: flex; gap: 16px; padding-top: 1px; }
.social-link { display: grid; place-items: center; width: 38px; height: 38px; border-radius: 50%; background: #303a47; }
.ico-social { width: 17px; height: 17px; }
.copyright { padding: 25px 0 1px; border-top: 1px solid #2a3442; color: #c1c5cb; font-size: 16px; font-weight: 500; text-align: center; }
.watermark { position: absolute; bottom: 39px; left: 50%; width: 206px; height: 44px; margin-left: -103px; }
```
